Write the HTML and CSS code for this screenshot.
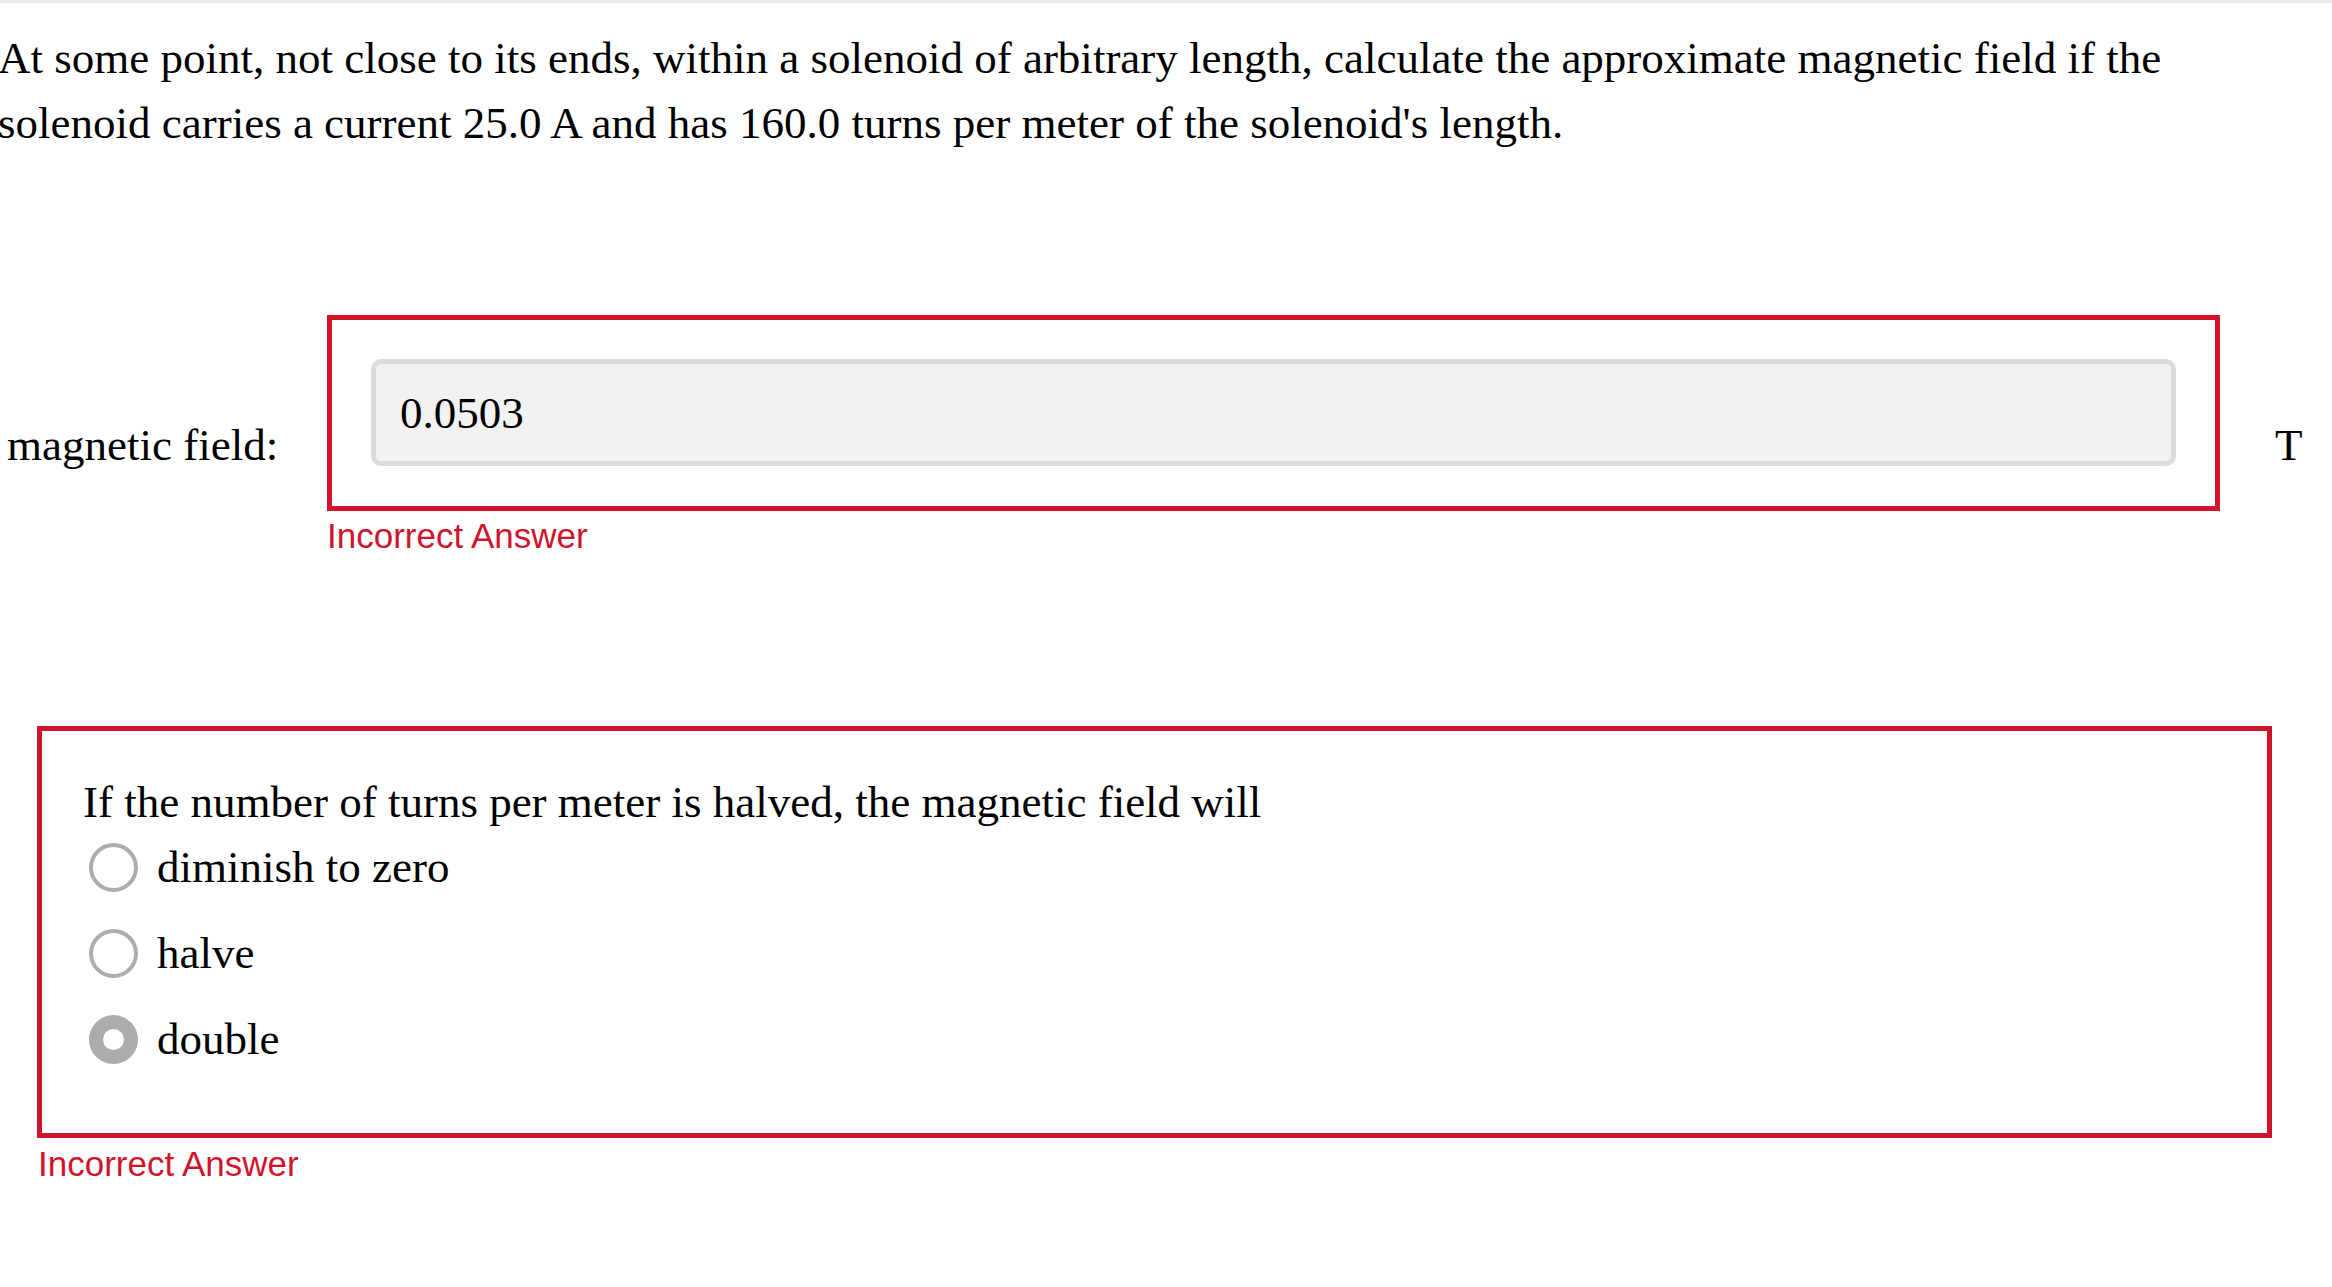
FILE: index.html
```html
<!DOCTYPE html>
<html lang="en">
<head>
<meta charset="utf-8">
<title>Solenoid question</title>
<link rel="stylesheet" href="styles.css">
</head>
<body>
<div class="topline"></div>
<main class="page">
  <p class="prompt">At some point, not close to its ends, within a solenoid of arbitrary length, calculate the approximate magnetic field if the solenoid carries a current 25.0 A and has 160.0 turns per meter of the solenoid's length.</p>

  <div class="answer-row">
    <span class="label">magnetic field:</span>
    <div class="field-wrap">
      <div class="box incorrect field-box">
        <input class="num" type="text" value="0.0503" readonly>
      </div>
      <div class="feedback">Incorrect Answer</div>
    </div>
    <span class="unit">T</span>
  </div>

  <section class="mc">
    <div class="box incorrect mc-box">
      <p class="mc-q">If the number of turns per meter is halved, the magnetic field will</p>
      <div class="opt"><span class="radio"></span><span class="opt-text">diminish to zero</span></div>
      <div class="opt"><span class="radio"></span><span class="opt-text">halve</span></div>
      <div class="opt"><span class="radio checked"></span><span class="opt-text">double</span></div>
    </div>
    <div class="feedback">Incorrect Answer</div>
  </section>
</main>
</body>
</html>
```

FILE: styles.css
```css
html, body {
  margin: 0;
  padding: 0;
  background: #ffffff;
}

body {
  font-family: "Liberation Serif", "Times New Roman", serif;
  font-size: 45px;
  line-height: 65px;
  color: #000000;
  overflow: hidden;
}

.topline {
  height: 3px;
  background: #ebebeb;
}

.page {
  display: flex;
  flex-direction: column;
  align-items: flex-start;
}

.prompt {
  margin: 23px 0 0 -2px;
  max-width: 2250px;
}

.answer-row {
  display: flex;
  align-items: flex-start;
  margin-top: 159px;
}

.label {
  width: 327px;
  box-sizing: border-box;
  padding-left: 7px;
  margin-top: 98px;
}

.unit {
  margin-left: 55px;
  margin-top: 98px;
}

.box.incorrect {
  border: 5px solid #d0142c;
  box-sizing: border-box;
}

.field-box {
  width: 1893px;
  padding: 39px 39px 40px 39px;
}

.num {
  display: block;
  width: 100%;
  height: 107px;
  box-sizing: border-box;
  margin: 0;
  padding: 0 24px;
  border: 5px solid #dcdcdc;
  border-radius: 10px;
  background: #f2f2f2;
  font-family: "Liberation Serif", "Times New Roman", serif;
  font-size: 45px;
  color: #000000;
  outline: none;
}

.feedback {
  font-family: "Liberation Sans", Arial, sans-serif;
  font-size: 35px;
  line-height: 38px;
  color: #d0142c;
  margin-top: 6px;
}

.mc {
  margin-top: 171px;
  margin-left: 37px;
}

.mc .feedback {
  margin-top: 7px;
  margin-left: 1px;
}

.mc-box {
  width: 2235px;
  padding: 39px 41px 61px 41px;
}

.mc-q {
  margin: 0;
}

.opt {
  display: flex;
  align-items: center;
  height: 65px;
}

.opt + .opt {
  margin-top: 21px;
}

.radio {
  width: 49px;
  height: 49px;
  box-sizing: border-box;
  border: 4.5px solid #adadad;
  border-radius: 50%;
  background: #ffffff;
  margin-left: 6px;
  margin-right: 19px;
  flex: none;
}

.radio.checked {
  border-width: 14px;
  border-color: #acacac;
}
```
